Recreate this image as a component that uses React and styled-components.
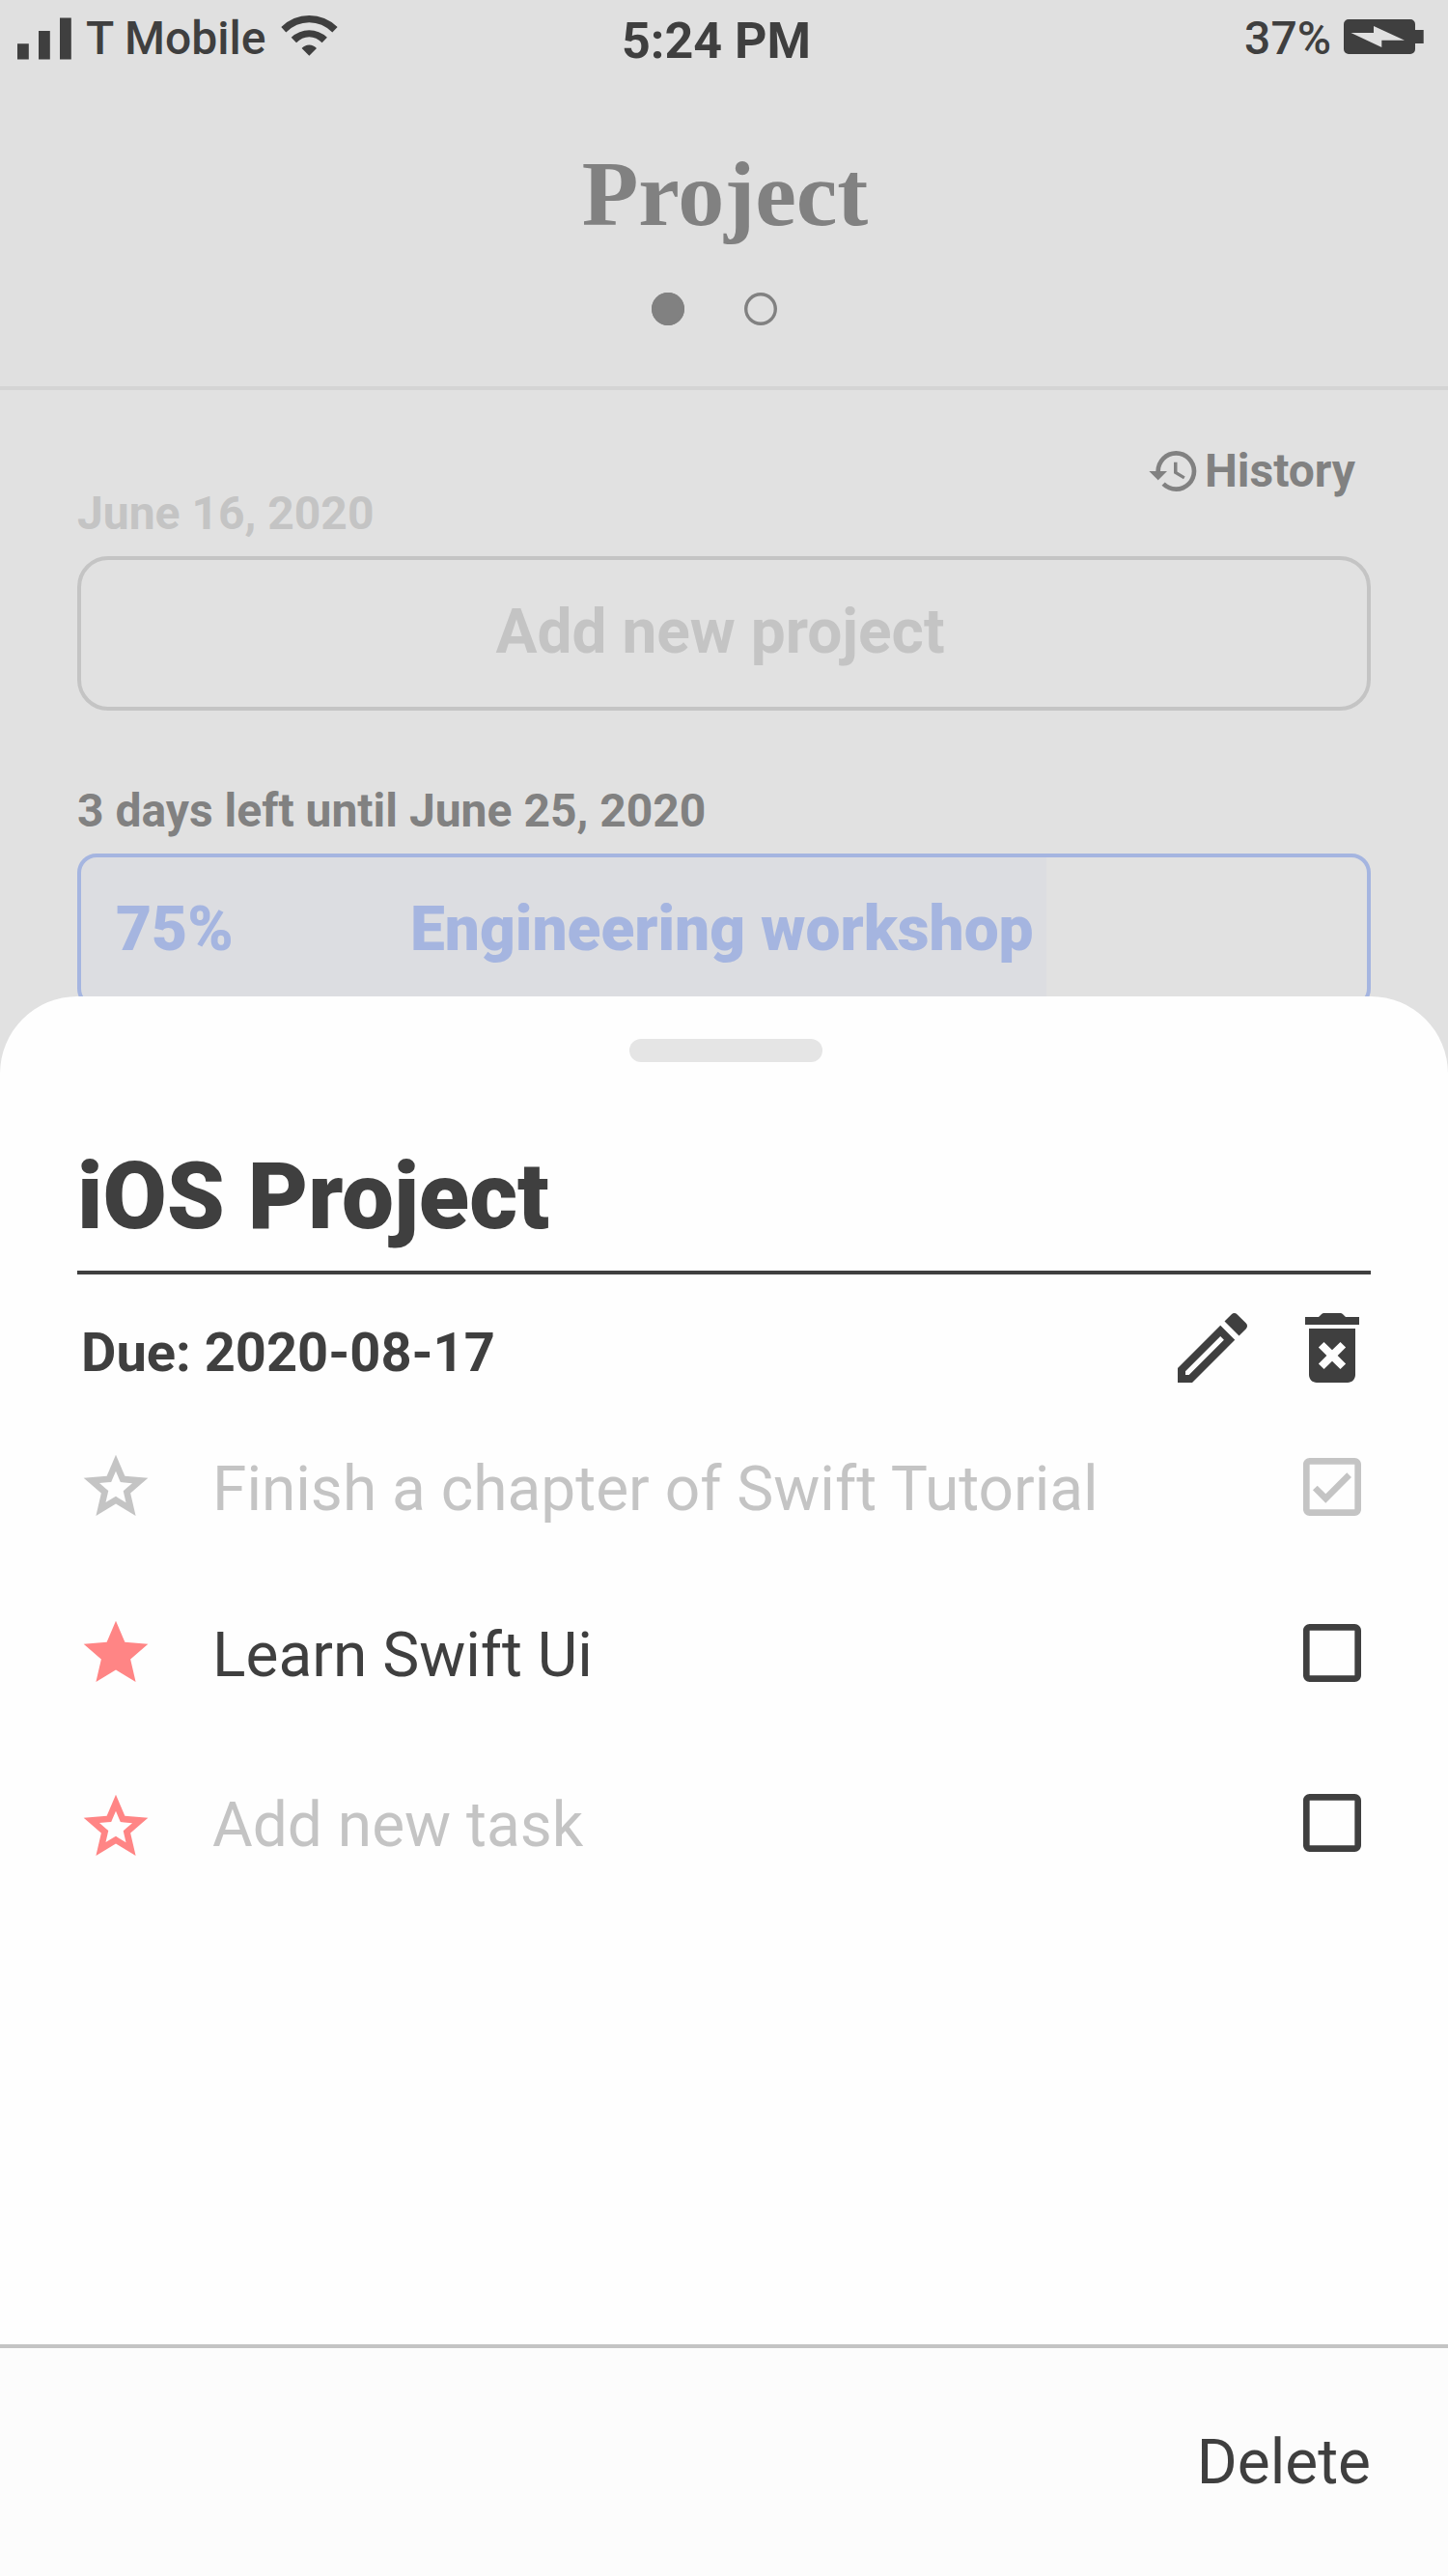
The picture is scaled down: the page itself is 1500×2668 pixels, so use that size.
import React from "react";
import styled, { createGlobalStyle } from "styled-components";

const ink = "#3f3f3f";
const dim = "#818181";
const faint = "#c4c4c4";
const blue = "#a5b5e0";
const coral = "#ff8585";

const GlobalStyle = createGlobalStyle`
  *, *::before, *::after { box-sizing: border-box; }
  body { margin: 0; font-family: Roboto, "Liberation Sans", sans-serif; color: ${ink}; }
  h1, h2, p, ul { margin: 0; padding: 0; }
  svg { display: block; flex: none; }
`;

const Screen = styled.div`
  position: relative;
  width: 1500px;
  height: 2668px;
  overflow: hidden;
  background: #e1e1e1;
`;

const Header = styled.header`
  height: 404px;
  background: #e0e0e0;
  border-bottom: 4px solid #d4d4d4;
`;

const StatusBar = styled.div`
  display: grid;
  grid-template-columns: 1fr auto 1fr;
  height: 80px;
  padding: 0 25px 0 18px;
`;

const StatusGroup = styled.div`
  display: flex;
  justify-content: ${(p) => (p.$end ? "flex-end" : "flex-start")};
  font-size: 48px;
  font-weight: 500;
  line-height: 57px;
  padding-top: 11px;
`;

const Carrier = styled.span`
  margin: 0 16px 0 15px;
`;

const Level = styled.span`
  margin-right: 13px;
`;

const Clock = styled.div`
  padding: 12px 9px 0 0;
  font-size: 52px;
  font-weight: 700;
  line-height: 61px;
`;

const Lift = styled.span`
  margin-top: ${(p) => p.$y}px;
`;

const ScreenTitle = styled.h1`
  margin-top: 66px;
  padding-left: 2px;
  text-align: center;
  font-family: "Liberation Serif", serif;
  font-size: 96px;
  font-weight: 700;
  line-height: 110px;
  color: ${dim};
`;

const Pager = styled.div`
  display: flex;
  justify-content: center;
  gap: 62px;
  margin-top: 47px;
  padding-right: 20px;
`;

const Dot = styled.span`
  width: 34px;
  height: 34px;
  border-radius: 50%;
  box-shadow: inset 0 0 0 3.4px ${dim};
  background: ${(p) => (p.$on ? dim : "transparent")};
`;

const Board = styled.main`
  display: flex;
  flex-direction: column;
  padding: 56px 80px 0;
`;

const History = styled.button`
  display: flex;
  align-self: flex-end;
  align-items: center;
  height: 56px;
  margin-right: 16px;
  padding: 0;
  gap: 4px;
  border: 0;
  background: none;
  color: ${dim};
  font: 700 48px/56px Roboto, sans-serif;
`;

const Caption = styled.p`
  font-size: 48px;
  font-weight: 700;
  line-height: 57px;
  color: ${(p) => p.$color};
  margin-top: ${(p) => p.$top}px;
`;

const AddBox = styled.button`
  height: 160px;
  margin-top: 16px;
  padding: 0 8px 3px 0;
  border: 4px solid ${faint};
  border-radius: 32px;
  background: none;
  color: ${faint};
  font: 700 64px/76px Roboto, sans-serif;
`;

const ProjectBox = styled.div`
  display: flex;
  align-items: center;
  height: 160px;
  margin-top: 16px;
  padding: 0 0 3px 36px;
  border: 4px solid ${blue};
  border-radius: 20px;
  background: linear-gradient(#dcdde1, #dcdde1) 0 0 / 1000px 100% no-repeat;
  color: ${blue};
  font-size: 64px;
  font-weight: 900;
  line-height: 76px;
`;

const Percent = styled.span`
  width: 305px;
`;

const Sheet = styled.section`
  position: absolute;
  inset: 1032px 0 0 0;
  display: flex;
  flex-direction: column;
  background: #fefefe;
  border-radius: 80px 80px 0 0;
`;

const Handle = styled.div`
  width: 200px;
  height: 24px;
  margin: 44px 0 0 652px;
  border-radius: 12px;
  background: #e5e5e5;
`;

const SheetTitle = styled.h2`
  margin: 83px 80px 0;
  height: 137px;
  border-bottom: 4px solid ${ink};
  font-size: 96px;
  font-weight: 900;
  line-height: 112px;
`;

const DueRow = styled.div`
  display: flex;
  margin: 28px 72px 0 84px;
  height: 152px;
`;

const Due = styled.p`
  flex: 1;
  padding-top: 20px;
  font-size: 56px;
  font-weight: 700;
  line-height: 66px;
`;

const Actions = styled.div`
  display: flex;
  gap: 28px;
`;

const TaskList = styled.ul`
  flex: 1;
  list-style: none;
  padding: 0 80px;
`;

const Task = styled.li`
  display: flex;
  height: ${(p) => p.$height}px;
`;

const TaskText = styled.span`
  flex: 1;
  margin: 5px 0 0 60px;
  font-size: 64px;
  line-height: 75px;
  color: ${(p) => p.$color};
`;

const Footer = styled.footer`
  display: flex;
  justify-content: flex-end;
  height: 240px;
  padding: 81px 80px 0;
  border-top: 4px solid ${faint};
  background: #fcfcfc;
`;

const DeleteButton = styled.button`
  height: 75px;
  padding: 0;
  border: 0;
  background: none;
  color: ${ink};
  font: 400 64px/75px Roboto, sans-serif;
`;

const Icon = ({ d, size, color }) => (
  <svg width={size} height={size} viewBox="0 0 24 24" fill={color}>
    <path d={d} />
  </svg>
);

const paths = {
  history:
    "M13 3a9 9 0 0 0-9 9H1l3.89 3.89.07.14L9 12H6c0-3.87 3.13-7 7-7s7 3.13 7 7-3.13 7-7 7c-1.93 0-3.68-.79-4.94-2.06l-1.42 1.42A8.954 8.954 0 0 0 13 21a9 9 0 0 0 0-18zm-1 5v5l4.28 2.54.72-1.21-3.5-2.08V8H12z",
  edit:
    "M14.06 9.02l.92.92L5.92 19H5v-.92l9.06-9.06M17.66 3c-.25 0-.51.1-.7.29l-1.83 1.83 3.75 3.75 1.83-1.83c.39-.39.39-1.02 0-1.41l-2.34-2.34c-.2-.2-.45-.29-.71-.29zm-3.6 3.19L3 17.25V21h3.75L17.81 9.94l-3.75-3.75z",
  trash:
    "M6 19c0 1.1.9 2 2 2h8c1.1 0 2-.9 2-2V7H6v12zm2.46-7.12l1.41-1.41L12 12.59l2.12-2.12 1.41 1.41L13.41 14l2.12 2.12-1.41 1.41L12 15.41l-2.12 2.12-1.41-1.41L10.59 14l-2.13-2.12zM15.5 4l-.71-.71c-.18-.18-.44-.29-.7-.29H9.91c-.26 0-.52.11-.7.29L8.5 4H5v2h14V4z",
  box:
    "M19 3H5c-1.1 0-2 .9-2 2v14c0 1.1.9 2 2 2h14c1.1 0 2-.9 2-2V5c0-1.1-.9-2-2-2zm0 16H5V5h14v14z",
  check: "M17.99 9l-1.41-1.42-6.59 6.59-2.58-2.57-1.42 1.41 4 3.99z",
  star:
    "M12 17.27L18.18 21l-1.64-7.03L22 9.24l-7.19-.61L12 2 9.19 8.63 2 9.24l5.46 4.73L5.82 21z",
  starOutline:
    "M12 7.13l.97 2.29.47 1.11 1.2.1 2.47.21-1.88 1.63-.91.79.27 1.18.56 2.41-2.12-1.28L12 14.9l-1.03.64-2.12 1.28.56-2.41.27-1.18-.91-.79-1.88-1.63 2.47-.21 1.2-.1.47-1.11.97-2.26M12 2L9.19 8.63 2 9.24l5.46 4.73L5.82 21 12 17.27 18.18 21l-1.64-7.03L22 9.24l-7.19-.61L12 2z",
};

const Signal = () => (
  <svg width="56" height="44" viewBox="0 0 56 44" fill={ink}>
    <path d="M0 27.2h11.8v16.4H0zM22 14h11.8v29.6H22zM44 .6h11.8v43H44z" />
  </svg>
);

const Wifi = () => (
  <svg width="59" height="42" viewBox="290.700 15.500 59 42" fill={ink}>
    <path d="M291 27.5Q303.500 15.600 320 15.600T349.300 27.500L344 33Q333.500 22.800 320 22.800T296 33ZM301.400 38.300Q309.500 30.700 320 30.700T338.600 38.300L333.300 43.700Q327.500 37.700 320 37.700T306.700 43.700ZM312.300 49.600Q315.500 46 320 46T327.700 49.600L320 57.200Z" />
  </svg>
);

const Battery = () => (
  <svg width="83" height="36" viewBox="1392 20 83 36">
    <path fill={ink} d="M1397 20h64a5 5 0 0 1 5 5v6h8.700v14H1466v6a5 5 0 0 1-5 5h-64a5 5 0 0 1-5-5V25a5 5 0 0 1 5-5z" />
    <path fill="#e0e0e0" d="M1399.500 34H1423V27L1455 41.700H1431.300V49Z" />
  </svg>
);

const tasks = [
  { text: "Finish a chapter of Swift Tutorial", color: faint, star: "starOutline", starColor: faint, box: faint, done: true, height: 172, drop: 0 },
  { text: "Learn Swift Ui", color: ink, star: "star", starColor: coral, box: ink, height: 176, drop: 0 },
  { text: "Add new task", color: faint, star: "starOutline", starColor: coral, box: ink, height: 80, drop: 4 },
];

export default function App() {
  return (
    <Screen>
      <GlobalStyle />
      <Header>
        <StatusBar>
          <StatusGroup>
            <Lift $y={7}><Signal /></Lift>
            <Carrier>T Mobile</Carrier>
            <Lift $y={4.5}><Wifi /></Lift>
          </StatusGroup>
          <Clock>5:24 PM</Clock>
          <StatusGroup $end>
            <Level>37%</Level>
            <Lift $y={9}><Battery /></Lift>
          </StatusGroup>
        </StatusBar>
        <ScreenTitle>Project</ScreenTitle>
        <Pager>
          <Dot $on />
          <Dot />
        </Pager>
      </Header>
      <Board>
        <History>
          <Icon d={paths.history} size={56} color={dim} />
          History
        </History>
        <Caption $color={faint} $top={-13}>June 16, 2020</Caption>
        <AddBox>Add new project</AddBox>
        <Caption $color={dim} $top={75}>3 days left until June 25, 2020</Caption>
        <ProjectBox>
          <Percent>75%</Percent>
          <span>Engineering workshop</span>
        </ProjectBox>
      </Board>
      <Sheet>
        <Handle />
        <SheetTitle>iOS Project</SheetTitle>
        <DueRow>
          <Due>Due: 2020-08-17</Due>
          <Actions>
            <Icon d={paths.edit} size={96} color={ink} />
            <Icon d={paths.trash} size={96} color={ink} />
          </Actions>
        </DueRow>
        <TaskList>
          {tasks.map((t) => (
            <Task key={t.text} $height={t.height}>
              <Lift $y={t.drop}><Icon d={paths[t.star]} size={80} color={t.starColor} /></Lift>
              <TaskText $color={t.color}>{t.text}</TaskText>
              <Icon d={paths.box + (t.done ? paths.check : "")} size={80} color={t.box} />
            </Task>
          ))}
        </TaskList>
        <Footer>
          <DeleteButton>Delete</DeleteButton>
        </Footer>
      </Sheet>
    </Screen>
  );
}
